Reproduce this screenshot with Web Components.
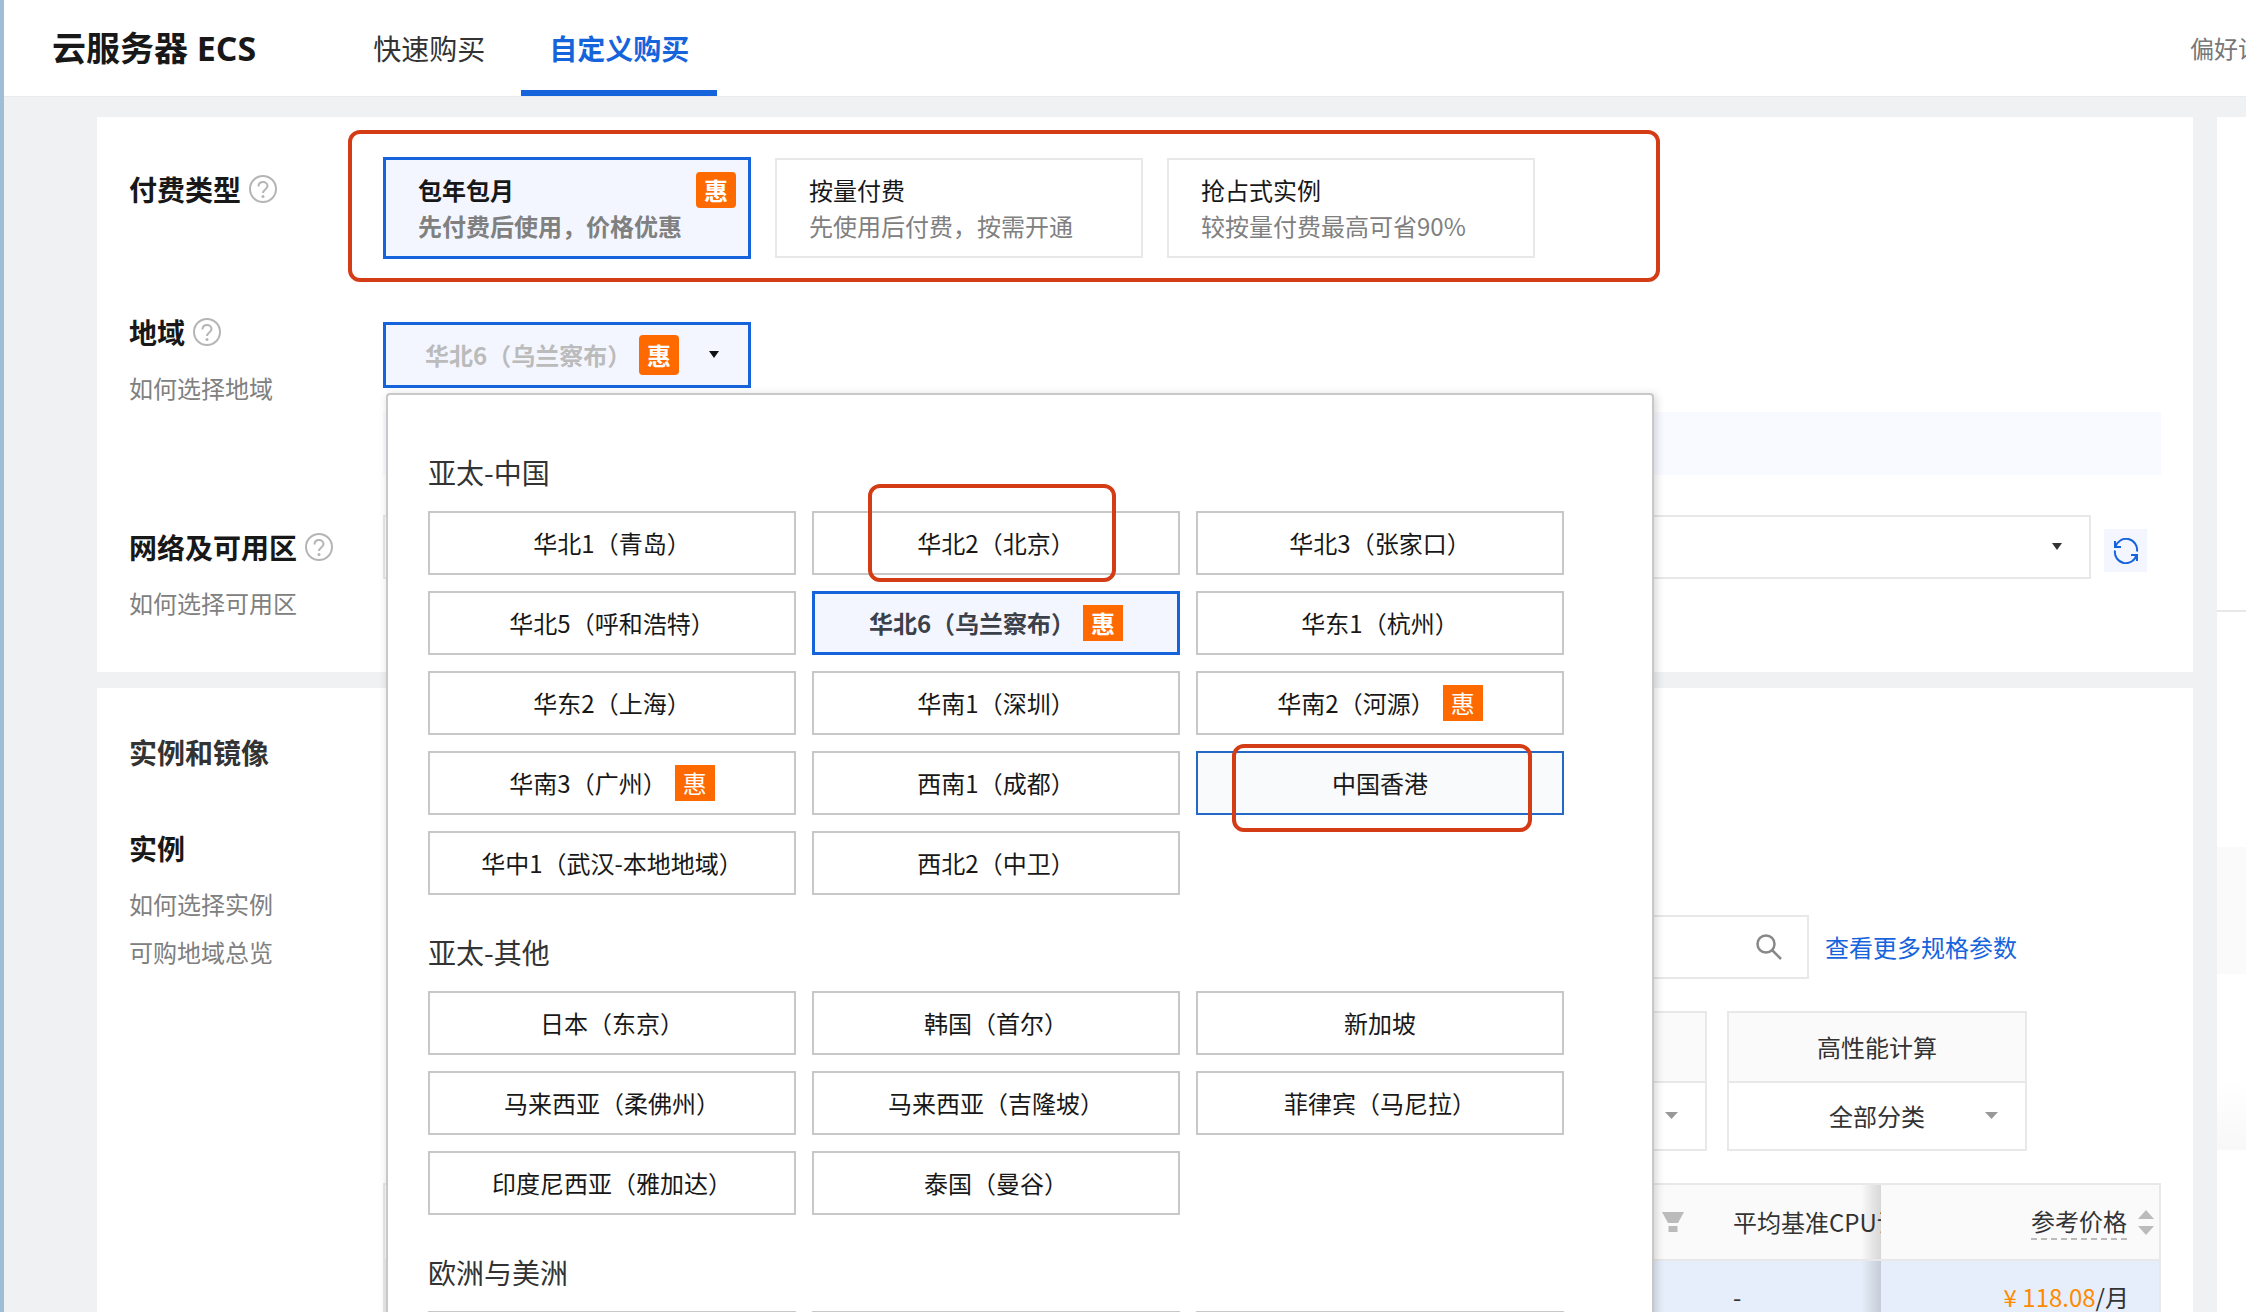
<!DOCTYPE html>
<html lang="zh-CN">
<head>
<meta charset="utf-8">
<title>云服务器 ECS</title>
<style>
  :root {
    --blue: #1664dc;
    --blue-soft: #f3f6ff;
    --ink: #181818;
    --ink-2: #333;
    --muted: #808080;
    --line: #e8e8e8;
    --line-dark: #c8c8c8;
    --orange: #ff6a00;
    --bg: #eff1f3;
  }
  html, body { margin: 0; height: 100%; }
  body {
    font: 24px/32px "Noto Sans CJK SC", sans-serif;
    color: var(--ink);
    background: var(--bg);
    overflow: hidden;
  }
</style>
</head>
<body>
<ecs-page>
  <ecs-header slot="header"></ecs-header>

  <ecs-card>
    <form-row class="pay" label="付费类型" help>
      <pay-types></pay-types>
    </form-row>
    <form-row class="region" label="地域" help links="如何选择地域">
      <region-select></region-select>
    </form-row>
    <form-row class="zone" label="网络及可用区" help links="如何选择可用区">
      <zone-select></zone-select>
    </form-row>
  </ecs-card>

  <ecs-card heading="实例和镜像">
    <form-row label="实例" links="如何选择实例,可购地域总览">
      <instance-picker></instance-picker>
    </form-row>
  </ecs-card>
</ecs-page>

<script>
/* ── shared bits ─────────────────────────────────────────────────────────── */

const base = `
  :host, *, *::before, *::after { box-sizing: border-box; }
  a { color: inherit; text-decoration: none; }
  button, input, select { font: inherit; color: inherit; margin: 0; border-radius: 0; }
  select { appearance: none; cursor: pointer; }
  svg { display: block; }
`;

function define(name, render) {
  customElements.define(name, class extends HTMLElement {
    connectedCallback() {
      if (this.shadowRoot) return;
      const tpl = document.createElement('template');
      tpl.innerHTML = render(this);
      this.attachShadow({ mode: 'open' }).append(tpl.content.cloneNode(true));
    }
  });
}

/* ── page frame ──────────────────────────────────────────────────────────── */

define('ecs-page', () => `
  <style>
    ${base}
    :host { display: flex; flex-direction: column; min-height: 100vh; border-left: 4px solid #9fbdd6; }
    .body { flex: 1; display: grid; grid-template-columns: minmax(0, 1fr) 29px; gap: 24px; padding: 20px 0 0 93px; }
    main { display: flex; flex-direction: column; gap: 16px; }
    aside { background: #fff; }
    .summary { height: 495px; border-bottom: 2px solid var(--line); }
    .coupon { height: 127px; margin-top: 235px; background: #fafafa; }
    .total { height: 70px; margin-top: 106px; background: linear-gradient(#fff, #f8f8f8); }
  </style>
  <slot name="header"></slot>
  <div class="body">
    <main><slot></slot></main>
    <aside>
      <div class="summary"></div>
      <div class="coupon"></div>
      <div class="total"></div>
    </aside>
  </div>
`);

define('ecs-header', () => `
  <style>
    ${base}
    :host { display: flex; align-items: stretch; height: 97px; padding-left: 48px; background: #fff; border-bottom: 1px solid #e9ebed; }
    h1 { margin: 0 89px 0 0; font: 700 34px/96px "Open Sans", "Noto Sans CJK SC", sans-serif; white-space: nowrap; }
    nav { display: flex; gap: 8px; }
    nav a { height: 96px; padding: 0 28px; font-size: 28px; line-height: 96px; color: var(--ink-2); border-bottom: 6px solid transparent; }
    nav a[aria-current] { color: var(--blue); font-weight: 700; border-color: var(--blue); }
    .pref { width: 56px; margin-left: auto; line-height: 96px; color: #777; white-space: nowrap; overflow: hidden; }
  </style>
  <h1>云服务器 ECS</h1>
  <nav>
    <a href="#quick">快速购买</a>
    <a href="#custom" aria-current="page">自定义购买</a>
  </nav>
  <a class="pref" href="#pref">偏好设置</a>
`);

define('ecs-card', (el) => `
  <style>
    ${base}
    :host { display: flex; flex-direction: column; gap: 40px; padding: 40px 32px 45px; background: #fff; }
    h2 { margin: 4px 0 20px; font-size: 28px; line-height: 40px; color: var(--ink-2); }
  </style>
  ${el.hasAttribute('heading') ? `<h2>${el.getAttribute('heading')}</h2>` : ''}
  <slot></slot>
`);

/* label column on the left, slotted control on the right */
define('form-row', (el) => {
  const links = (el.getAttribute('links') || '').split(',').filter(Boolean);
  return `
  <style>
    ${base}
    :host { display: grid; grid-template-columns: 254px minmax(0, 1fr); }
    :host(.pay) { padding-bottom: 17px; }
    :host(.pay) .label, :host(.zone) .label { padding-top: 16px; }
    :host(.region) .control { padding-top: 6px; }
    h3 { display: flex; align-items: center; gap: 8px; margin: 0 0 16px; font-size: 28px; line-height: 32px; white-space: nowrap; }
    .label a { display: block; line-height: 48px; color: var(--muted); }
  </style>
  <div class="label">
    <h3>${el.getAttribute('label')}${el.hasAttribute('help') ? '<help-icon></help-icon>' : ''}</h3>
    ${links.map((t) => `<a href="#help">${t}</a>`).join('')}
  </div>
  <div class="control"><slot></slot></div>
`;
});

define('help-icon', () => `
  <style>${base} :host { display: block; }</style>
  <svg width="28" height="28" viewBox="0 0 28 28" fill="none" stroke="#b5b5b5" stroke-width="2">
    <circle cx="14" cy="14" r="13"/>
    <path d="M9.5 11.5c0-2.8 1.900-4.500 4.500-4.500s4.500 1.700 4.500 4c0 3.400-4.500 3.600-4.500 7"/>
    <circle cx="14" cy="21.500" r="1.500" fill="#b5b5b5" stroke="none"/>
  </svg>
`);

define('hui-badge', () => `
  <style>
    :host {
      display: block; flex: none; width: 40px; height: 36px;
      background: var(--orange); color: #fff; text-align: center; line-height: 36px;
    }
    :host(.round) { border-radius: 4px; }
    :host(.tall) { height: 40px; line-height: 40px; }
  </style>
  惠
`);

/* red marker drawn over whatever it annotates */
define('mark-box', () => `
  <style>
    :host {
      position: absolute; box-sizing: border-box; z-index: 2; pointer-events: none;
      border: 4px solid #d43c16; border-radius: 12px;
    }
  </style>
`);

/* ── payment type ────────────────────────────────────────────────────────── */

define('pay-types', () => `
  <style>
    ${base}
    :host { display: flex; align-items: center; gap: 24px; height: 102px; position: relative; }
    button {
      position: relative; width: 368px; height: 100px; padding: 0 32px;
      text-align: left; background: #fff; border: 2px solid var(--line); cursor: pointer;
    }
    button[aria-pressed="true"] { height: 102px; background: var(--blue-soft); border: 3px solid var(--blue); font-weight: 700; }
    span { display: block; line-height: 36px; white-space: nowrap; }
    .desc { color: var(--muted); }
    hui-badge { position: absolute; top: 12px; right: 12px; }
    mark-box { top: -27px; left: -35px; width: 1312px; height: 152px; }
  </style>
  <button type="button" aria-pressed="true">
    <span>包年包月</span><span class="desc">先付费后使用，价格优惠</span>
    <hui-badge class="round"></hui-badge>
  </button>
  <button type="button"><span>按量付费</span><span class="desc">先使用后付费，按需开通</span></button>
  <button type="button"><span>抢占式实例</span><span class="desc">较按量付费最高可省90%</span></button>
  <mark-box></mark-box>
`);

/* ── region ──────────────────────────────────────────────────────────────── */

const REGIONS = [
  ['亚太-中国', [
    { name: '华北1（青岛）' },
    { name: '华北2（北京）', mark: 'beijing' },
    { name: '华北3（张家口）' },
    { name: '华北5（呼和浩特）' },
    { name: '华北6（乌兰察布）', hui: true, state: 'selected' },
    { name: '华东1（杭州）' },
    { name: '华东2（上海）' },
    { name: '华南1（深圳）' },
    { name: '华南2（河源）', hui: true },
    { name: '华南3（广州）', hui: true },
    { name: '西南1（成都）' },
    { name: '中国香港', state: 'hover', mark: 'hongkong' },
    { name: '华中1（武汉-本地地域）' },
    { name: '西北2（中卫）' },
  ]],
  ['亚太-其他', [
    { name: '日本（东京）' },
    { name: '韩国（首尔）' },
    { name: '新加坡' },
    { name: '马来西亚（柔佛州）' },
    { name: '马来西亚（吉隆坡）' },
    { name: '菲律宾（马尼拉）' },
    { name: '印度尼西亚（雅加达）' },
    { name: '泰国（曼谷）' },
  ]],
  ['欧洲与美洲', [{ name: '' }, { name: '' }, { name: '' }]],
];

const regionButton = (r) => `
  <div class="cell">
    <button type="button" class="${r.state || ''}">
      ${r.name}${r.hui ? '<hui-badge></hui-badge>' : ''}
    </button>
    ${r.mark ? `<mark-box class="${r.mark}"></mark-box>` : ''}
  </div>
`;

define('region-panel', () => `
  <style>
    ${base}
    :host {
      display: flex; flex-direction: column; gap: 36px; width: max-content;
      padding: 56px 88px 56px 40px; background: #fff;
      border: 2px solid var(--line-dark); border-radius: 4px;
      box-shadow: 2px 2px 10px rgba(0, 0, 0, .18);
    }
    h4 { margin: 0 0 18px; font-size: 28px; line-height: 42px; font-weight: 400; color: var(--ink-2); }
    .grid { display: grid; grid-template-columns: repeat(3, 368px); gap: 16px; }
    .cell { position: relative; }
    button {
      display: flex; align-items: center; justify-content: center; gap: 8px;
      width: 100%; height: 64px; padding: 0; background: #fff;
      border: 2px solid var(--line-dark); cursor: pointer;
    }
    .selected { color: #3c4048; font-weight: 700; background: var(--blue-soft); border: 3px solid var(--blue); }
    .hover { background: #f8fafc; border-color: #2468c8; }
    .beijing { top: -27px; left: 56px; width: 248px; height: 98px; }
    .hongkong { top: -7px; left: 36px; width: 300px; height: 88px; }
  </style>
  ${REGIONS.map(([title, list]) => `
    <section>
      <h4>${title}</h4>
      <div class="grid">${list.map(regionButton).join('')}</div>
    </section>
  `).join('')}
`);

define('region-select', () => `
  <style>
    ${base}
    :host { display: block; position: relative; }
    .field { position: relative; width: 368px; height: 66px; }
    select {
      width: 100%; height: 100%; padding: 0 0 0 39px; color: #bbb; font-weight: 700;
      background: var(--blue-soft); border: 3px solid var(--blue); opacity: 1;
    }
    hui-badge { position: absolute; top: 13px; left: 256px; font-weight: 700; }
    svg { position: absolute; top: 29px; right: 32px; }
    region-panel { position: absolute; top: 71px; left: 3px; z-index: 10; }
    .tip { height: 63px; margin-top: 24px; background: #f8faff; }
  </style>
  <div class="field">
    <select aria-label="地域"><option>华北6（乌兰察布）</option></select>
    <hui-badge class="round tall"></hui-badge>
    <svg width="10" height="7" viewBox="0 0 10 7" fill="#111"><path d="M0 0h10L5 7z"/></svg>
  </div>
  <region-panel></region-panel>
  <div class="tip"></div>
`);

/* ── network and zone ────────────────────────────────────────────────────── */

define('zone-select', () => `
  <style>
    ${base}
    :host { display: flex; align-items: flex-start; gap: 13px; padding-right: 14px; }
    .field { flex: 1; position: relative; height: 64px; }
    select { width: 100%; height: 100%; background: #fff; border: 2px solid var(--line); }
    .field svg { position: absolute; top: 28px; right: 29px; }
    button {
      display: grid; place-items: center; width: 43px; height: 43px; margin-top: 14px; padding: 0;
      color: var(--blue); background: var(--blue-soft); border: 0; cursor: pointer;
    }
  </style>
  <div class="field">
    <select aria-label="网络及可用区"><option></option></select>
    <svg width="10" height="7" viewBox="0 0 10 7" fill="#333"><path d="M0 0h10L5 7z"/></svg>
  </div>
  <button type="button" aria-label="刷新">
    <svg width="26" height="26" viewBox="0 0 26 26" fill="none" stroke="currentColor" stroke-width="2">
      <path d="M2 3v6h6M24 23v-6h-6M2.500 9A11 11 0 0 1 24 13.500M23.500 17A11 11 0 0 1 2 12.500"/>
    </svg>
  </button>
`);

/* ── instance picker ─────────────────────────────────────────────────────── */

const categoryCard = (title, option) => `
  <div class="cat">
    <div class="name">${title}</div>
    <div class="pick">
      <select aria-label="${title || '分类'}"><option>${option}</option></select>
      <svg width="13" height="7" viewBox="0 0 13 7" fill="#999"><path d="M0 0h13L6.500 7z"/></svg>
    </div>
  </div>
`;

define('instance-picker', () => `
  <style>
    ${base}
    :host { display: flex; flex-direction: column; gap: 32px; padding-top: 83px; }
    .search { display: flex; align-items: center; justify-content: flex-end; gap: 16px; padding-right: 144px; }
    .box { position: relative; width: 400px; height: 64px; }
    input { width: 100%; height: 100%; padding: 0 60px 0 16px; background: #fff; border: 2px solid var(--line); }
    .box svg { position: absolute; top: 19px; right: 27px; }
    .search a { color: var(--blue); }

    .cats { display: flex; gap: 20px; padding-left: 64px; }
    .cat { flex: none; width: 300px; height: 140px; border: 2px solid var(--line); text-align: center; color: var(--ink-2); }
    .name { height: 70px; line-height: 68px; background: #fafafa; border-bottom: 2px solid var(--line); }
    .pick { position: relative; height: 66px; }
    .pick select { width: 100%; height: 100%; background: #fff; border: 0; text-align-last: center; }
    .pick svg { position: absolute; top: 29px; right: 27px; }

    .table { overflow: hidden; border: 2px solid var(--line); border-bottom: 0; }
    table { width: 100%; table-layout: fixed; border-collapse: collapse; color: var(--ink-2); }
    th, td { height: 72px; padding: 0; font-weight: 400; text-align: left; white-space: nowrap; overflow: hidden; }
    th { height: 75px; background: #fafafa; border-bottom: 2px solid var(--line); }
    td { background: #e6eefb; }
    .cpu { width: 164px; padding-left: 16px; background-image: linear-gradient(to left, rgba(0, 0, 0, .14), transparent 20px); }
    .price { width: 278px; padding-right: 30px; text-align: right; }
    th.price { padding-right: 5px; }
    .filter svg { margin: 0 33px 0 auto; }
    .sort { display: flex; align-items: center; justify-content: flex-end; gap: 11px; }
    .sort span { line-height: 34px; border-bottom: 2px dashed #bbb; }
    em { font-style: normal; color: #ff8a00; }
  </style>

  <div class="search">
    <div class="box">
      <input type="text" aria-label="搜索规格">
      <svg width="26" height="26" viewBox="0 0 26 26" fill="none" stroke="#888" stroke-width="2.500">
        <circle cx="10" cy="10" r="8.500"/><path d="M16 16l9 9"/>
      </svg>
    </div>
    <a href="#spec">查看更多规格参数</a>
  </div>

  <div class="cats">
    ${categoryCard('', '')}${categoryCard('', '')}${categoryCard('', '')}${categoryCard('', '')}
    ${categoryCard('高性能计算', '全部分类')}
  </div>

  <div class="table">
    <table>
      <thead>
        <tr>
          <th class="filter">
            <svg width="22" height="20" viewBox="0 0 22 20" fill="#bbb"><path d="M0 0h22l-6 11H6zM6.500 14h9v6h-9z"/></svg>
          </th>
          <th class="cpu">平均基准CPU计</th>
          <th class="price">
            <div class="sort">
              <span>参考价格</span>
              <svg width="16" height="25" viewBox="0 0 16 25" fill="#bbb"><path d="M8 0l8 9H0zM8 25l8-9H0z"/></svg>
            </div>
          </th>
        </tr>
      </thead>
      <tbody>
        <tr>
          <td></td>
          <td class="cpu">-</td>
          <td class="price"><em>¥ 118.08</em>/月</td>
        </tr>
      </tbody>
    </table>
  </div>
`);
</script>
</body>
</html>
